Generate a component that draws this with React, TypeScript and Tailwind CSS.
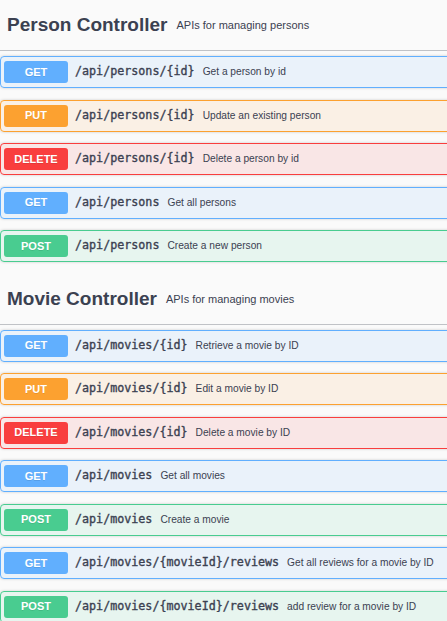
import React from "react"

type Method = "GET" | "PUT" | "DELETE" | "POST"

const methodStyles: Record<Method, { row: string; badge: string }> = {
  GET: { row: "bg-[#61affe]/10 border-[#61affe]", badge: "bg-[#61affe]" },
  PUT: { row: "bg-[#fca130]/10 border-[#fca130]", badge: "bg-[#fca130]" },
  DELETE: { row: "bg-[#f93e3e]/10 border-[#f93e3e]", badge: "bg-[#f93e3e]" },
  POST: { row: "bg-[#49cc90]/10 border-[#49cc90]", badge: "bg-[#49cc90]" },
}

const sections = [
  {
    name: "Person Controller",
    description: "APIs for managing persons",
    ops: [
      { method: "GET" as Method, path: "/api/persons/{id}", summary: "Get a person by id" },
      { method: "PUT" as Method, path: "/api/persons/{id}", summary: "Update an existing person" },
      { method: "DELETE" as Method, path: "/api/persons/{id}", summary: "Delete a person by id" },
      { method: "GET" as Method, path: "/api/persons", summary: "Get all persons" },
      { method: "POST" as Method, path: "/api/persons", summary: "Create a new person" },
    ],
  },
  {
    name: "Movie Controller",
    description: "APIs for managing movies",
    ops: [
      { method: "GET" as Method, path: "/api/movies/{id}", summary: "Retrieve a movie by ID" },
      { method: "PUT" as Method, path: "/api/movies/{id}", summary: "Edit a movie by ID" },
      { method: "DELETE" as Method, path: "/api/movies/{id}", summary: "Delete a movie by ID" },
      { method: "GET" as Method, path: "/api/movies", summary: "Get all movies" },
      { method: "POST" as Method, path: "/api/movies", summary: "Create a movie" },
      { method: "GET" as Method, path: "/api/movies/{movieId}/reviews", summary: "Get all reviews for a movie by ID" },
      { method: "POST" as Method, path: "/api/movies/{movieId}/reviews", summary: "add review for a movie by ID" },
    ],
  },
]

function OpRow({ method, path, summary }: { method: Method; path: string; summary: string }) {
  const s = methodStyles[method]
  return (
    <div
      className={`h-[32px] mb-[11.5px] flex items-center pl-[3px] border rounded-[4px] shadow-[0_0_3px_rgba(0,0,0,0.19)] ${s.row}`}
    >
      <span
        className={`w-[64px] h-[22px] flex items-center justify-center rounded-[3px] text-white font-bold text-[11px] [text-shadow:0_1px_0_rgba(0,0,0,0.1)] ${s.badge}`}
      >
        {method}
      </span>
      <span className="ml-[7px] font-['DejaVu_Sans_Mono',monospace] text-[11.7px] text-[#3b4151] [-webkit-text-stroke:0.35px_#3b4151] whitespace-nowrap">
        {path}
      </span>
      <span className="ml-[8px] text-[10.2px] text-[#3b4151] whitespace-nowrap">{summary}</span>
    </div>
  )
}

export default function App() {
  return (
    <div className="w-[447px] min-h-screen overflow-hidden bg-[#fafafa] font-['Liberation_Sans',Arial,sans-serif]">
      <div className="w-[480px]">
        {sections.map((section, i) => (
          <div key={section.name} className={i > 0 ? "mt-[3px]" : ""}>
            {/* Tag header */}
            <div className="h-[51px] flex items-start border-b border-[#3b4151]/30">
              <div className="flex items-center pt-[13px] pl-[7px]">
                <h3 className="text-[19px] leading-[24px] font-bold text-[#3b4151]">{section.name}</h3>
                <span className="ml-[9px] text-[11px] leading-[14px] text-[#3b4151]">{section.description}</span>
              </div>
            </div>

            <div className="pt-[5px]">
              {section.ops.map((op, j) => (
                <OpRow key={j} {...op} />
              ))}
            </div>
          </div>
        ))}
      </div>
    </div>
  )
}
